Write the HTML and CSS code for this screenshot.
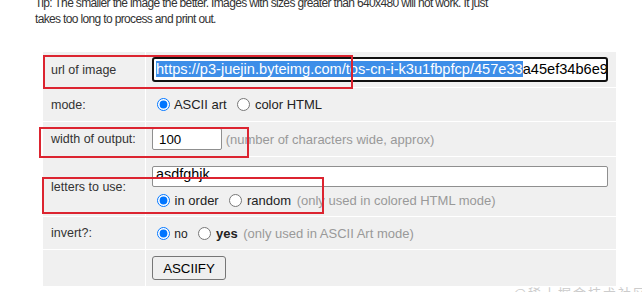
FILE: index.html
```html
<!DOCTYPE html>
<html lang="en">

<head>
    <meta charset="UTF-8" />
    <meta name="viewport" content="width=device-width, initial-scale=1" />
    <title>ASCII Art Generator</title>
    <link rel="stylesheet" href="styles.css">
</head>

<body>
    <p class="tip">Tip: The smaller the image the better. Images with sizes greater than 640x480 will not work. It just
        takes too long to process and print out.</p>

    <form class="asciify-form" onsubmit="return false;">
        <table class="options">
            <colgroup>
                <col class="col-label">
                <col>
            </colgroup>
            <tr class="row-url">
                <td class="label">url of image</td>
                <td>
                    <div class="url-field"><span class="selected">https://p3-juejin.byteimg.com/tos-cn-i-k3u1fbpfcp/457e33</span>a45ef34b6e9d4c8f</div>
                </td>
            </tr>
            <tr class="row-mode">
                <td class="label">mode:</td>
                <td>
                    <label><input type="radio" name="mode" checked> ASCII art</label>
                    <label><input type="radio" name="mode"> color HTML</label>
                </td>
            </tr>
            <tr class="row-width">
                <td class="label">width of output:</td>
                <td>
                    <input type="text" class="width-input" value="100">
                    <span class="hint">(number of characters wide, approx)</span>
                </td>
            </tr>
            <tr class="row-letters">
                <td class="label">letters to use:</td>
                <td>
                    <input type="text" class="letters-input" value="asdfghjk">
                    <div class="radio-line">
                        <label><input type="radio" name="order" checked> in order</label>
                        <label><input type="radio" name="order"> random</label>
                        <span class="hint">(only used in colored HTML mode)</span>
                    </div>
                </td>
            </tr>
            <tr class="row-invert">
                <td class="label">invert?:</td>
                <td>
                    <label class="small"><input type="radio" name="invert" checked> no</label>
                    <label class="bold"><input type="radio" name="invert"> yes</label>
                    <span class="hint">(only used in ASCII Art mode)</span>
                </td>
            </tr>
            <tr class="row-submit">
                <td class="label"></td>
                <td><button type="submit">ASCIIFY</button></td>
            </tr>
        </table>
    </form>

    <!-- annotation boxes -->
    <div class="mark mark-url"></div>
    <div class="mark mark-width"></div>
    <div class="mark mark-letters"></div>

    <div class="watermark">@稀土掘金技术社区</div>
</body>

</html>
```

FILE: styles.css
```css
/* Reset & base */
* {
    box-sizing: border-box;
}

body {
    margin: 0;
    padding: 0 35px;
    position: relative;
    min-height: 292px;
    overflow: hidden;
    background: #fff;
    color: #222;
    font-family: 'Liberation Sans', Arial, sans-serif;
    font-size: 13px;
}

/* Tip */
.tip {
    margin: -5px 0 0;
    max-width: 465px;
    font-size: 12px;
    line-height: 16px;
    letter-spacing: -0.65px;
    color: #333;
}

/* Form table */
.asciify-form {
    margin: 25px 0 0 8px;
}

.options {
    width: 573px;
    table-layout: fixed;
    border-collapse: separate;
    border-spacing: 0;
}

.col-label {
    width: 103px;
}

.options td {
    background: #f0f0f0;
    border-bottom: 1px solid #fff;
    padding: 0 6px;
    vertical-align: middle;
    white-space: nowrap;
}

.options td.label {
    padding: 0 2px 0 8px;
    border-right: 1px solid #fff;
    color: #333;
    font-size: 12.5px;
}

.row-url td { height: 36px; }
.row-mode td { height: 34px; }
.row-width td { height: 35px; }
.row-letters td { height: 60px; }
.row-invert td { height: 33px; }
.row-submit td { height: 36px; border-bottom: none; }

.row-letters td {
    padding-top: 9px;
    padding-bottom: 8px;
}

label {
    color: #222;
    margin-right: 2px;
}

input[type="radio"] {
    margin: 0 1px 0 5px;
    width: 13px;
    height: 13px;
    vertical-align: -2px;
}

.hint {
    color: #999;
}

.small {
    font-size: 12px;
}

.bold {
    font-weight: 700;
}

/* URL field with selected text */
.url-field {
    width: 456px;
    height: 25px;
    padding: 2px 2px;
    border: 2px solid #101010;
    border-radius: 3px;
    background: #fff;
    color: #000;
    font-size: 14.6px;
    line-height: 17px;
    overflow: hidden;
}

.url-field .selected {
    background: #3d8ee8;
    color: #fff;
}

input[type="text"] {
    font-family: inherit;
    color: #000;
    border: 1px solid #8f8f8f;
    border-radius: 2px;
    background: #fff;
}

.width-input {
    width: 70px;
    height: 22px;
    padding: 1px 6px;
    font-size: 13.3px;
}

.letters-input {
    display: block;
    width: 456px;
    height: 21px;
    padding: 0 3px 6px;
    font-size: 14.4px;
    line-height: 13px;
}

.radio-line {
    margin-top: 6px;
}

button[type="submit"] {
    font-family: inherit;
    font-size: 13.3px;
    color: #000;
    background: #efefef;
    border: 1px solid #767676;
    border-radius: 3px;
    padding: 3px 6px;
    height: 24px;
    width: 74px;
}

/* Red annotation boxes */
.mark {
    position: absolute;
    border: 2px solid #dc2430;
    pointer-events: none;
}

.mark-url {
    left: 43px;
    top: 55px;
    width: 310px;
    height: 34px;
}

.mark-width {
    left: 39px;
    top: 127px;
    width: 210px;
    height: 31px;
}

.mark-letters {
    left: 42px;
    top: 177px;
    width: 282px;
    height: 37px;
}

.watermark {
    position: absolute;
    right: -6px;
    top: 283px;
    font-family: 'Noto Sans CJK SC', sans-serif;
    font-size: 13px;
    color: #ccc;
    letter-spacing: 2px;
}
```
